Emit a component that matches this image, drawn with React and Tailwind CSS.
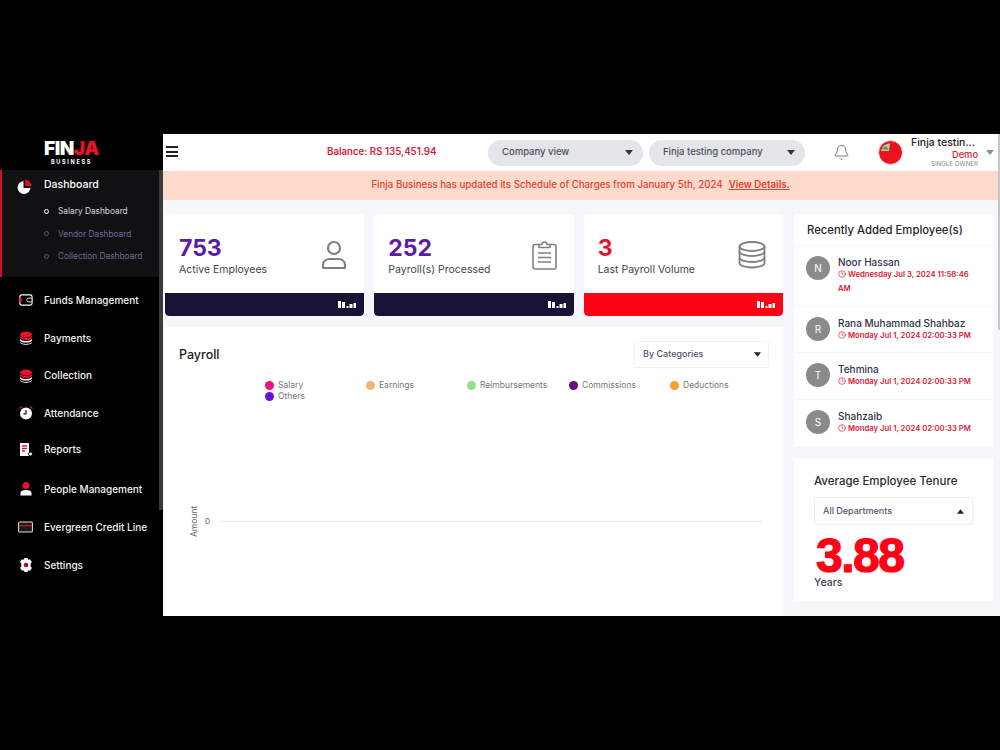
import React from "react";
import { Bell, Clock } from "lucide-react";

const font = { fontFamily: "Inter, 'Liberation Sans', sans-serif" };

const Caret = ({ up, className = "" }) => (
  <svg width="8" height="5" viewBox="0 0 8 5" className={className}>
    <path d={up ? "M0 5L4 0L8 5Z" : "M0 0L8 0L4 5Z"} fill="currentColor" />
  </svg>
);

const UserIcon = () => (
  <svg width="26" height="30" viewBox="0 0 26 30" fill="none" stroke="#808080" strokeWidth="2.200">
    <circle cx="13" cy="8" r="6" />
    <path d="M2 28v-3c0-3.500 3-6 7-6h8c4 0 7 2.500 7 6v3z" strokeLinejoin="round" />
  </svg>
);

const ClipIcon = () => (
  <svg width="25" height="30" viewBox="0 0 25 30" fill="none" stroke="#808080" strokeWidth="1.600" strokeLinejoin="round">
    <path d="M7 4.500H3a2 2 0 0 0-2 2V27a2 2 0 0 0 2 2h19a2 2 0 0 0 2-2V6.500a2 2 0 0 0-2-2h-4" />
    <path d="M7 7.500V4.500h3a2.500 2.500 0 0 1 5 0h3v3z" />
    <path d="M6 13h13M6 17.500h13M6 22h13" />
  </svg>
);

const StackIcon = () => (
  <svg width="28" height="28" viewBox="0 0 28 28" fill="none" stroke="#808080" strokeWidth="1.800">
    <ellipse cx="14" cy="5.500" rx="12.500" ry="4.500" />
    <path d="M1.500 5.500v5c0 2.500 5.600 4.500 12.500 4.500s12.500-2 12.500-4.500v-5" />
    <path d="M1.500 10.500v6c0 2.500 5.600 4.500 12.500 4.500s12.500-2 12.500-4.500v-6" />
    <path d="M1.500 16.500v5.500c0 2.500 5.600 4.500 12.500 4.500s12.500-2 12.500-4.500v-5.500" />
  </svg>
);

const icons = {
  wallet: (
    <svg width="16" height="14" viewBox="0 0 16 14">
      <rect x="2" y="1.500" width="13" height="11" rx="2" fill="none" stroke="#fff" strokeWidth="1.200" />
      <rect x="9.500" y="5" width="5.500" height="4" rx="1.500" fill="#000" stroke="#fff" strokeWidth="1" />
      <circle cx="2.500" cy="7" r="2" fill="#e8112d" />
    </svg>
  ),
  coins: (
    <svg width="14" height="14" viewBox="0 0 14 14">
      <ellipse cx="7" cy="3.500" rx="6" ry="3" fill="#e8112d" />
      <path d="M1 4v2c0 1.600 2.700 3 6 3s6-1.400 6-3V4c0 1.600-2.700 3-6 3S1 5.600 1 4z" fill="#e8112d" />
      <path d="M1 7.500v1.500c0 1.600 2.700 2.600 6 2.600s6-1 6-2.600V7.500c0 1.600-2.700 2.500-6 2.500s-6-.9-6-2.500z" fill="#fff" />
      <path d="M1 10.500v.7c0 1.500 2.700 2.500 6 2.500s6-1 6-2.500v-.7c0 1.500-2.700 2.400-6 2.400s-6-.9-6-2.400z" fill="#fff" />
    </svg>
  ),
  clock: (
    <svg width="14" height="14" viewBox="0 0 14 14">
      <path d="M0.500 2.500L3 .5M13.500 2.500L11 .5" stroke="#e8112d" strokeWidth="1.200" />
      <circle cx="7" cy="7.500" r="6" fill="#fff" />
      <path d="M7 4v3.800h-2.500" stroke="#111" strokeWidth="1.200" fill="none" />
    </svg>
  ),
  report: (
    <svg width="14" height="15" viewBox="0 0 14 15">
      <path d="M1 1h9v13H1z" fill="#fff" />
      <path d="M3 4h5M3 6.500h5" stroke="#e8112d" strokeWidth="1.300" />
      <path d="M3 9h3" stroke="#333" strokeWidth="1.300" />
      <circle cx="11.500" cy="12" r="2" fill="#fff" stroke="#000" />
    </svg>
  ),
  person: (
    <svg width="12" height="14" viewBox="0 0 12 14">
      <circle cx="6" cy="3.500" r="3.500" fill="#e8112d" />
      <path d="M0.500 13.500v-2.500c0-2 2-3 5.500-3s5.500 1 5.500 3v2.500z" fill="#fff" />
    </svg>
  ),
  card: (
    <svg width="16" height="12" viewBox="0 0 16 12">
      <rect x=".6" y=".6" width="14.800" height="10.800" rx="1.500" fill="#1b1b1b" stroke="#ddd" strokeWidth="1.100" />
      <path d="M1 4.500h14" stroke="#e8112d" strokeWidth="1.200" />
    </svg>
  ),
  gear: (
    <svg width="14" height="14" viewBox="0 0 14 14">
      <path d="M5.500 0h3l.6 1.800 1.800-.6 2 2.800-1.200 1.500v3l1.200 1.500-2 2.800-1.800-.6-.6 1.800h-3l-.6-1.800-1.800.6-2-2.800 1.200-1.500v-3L.9 4l2-2.800 1.800.6z" fill="#fff" />
      <circle cx="7" cy="7" r="2.300" fill="#a50f2a" />
    </svg>
  ),
};

const menu = [
  { label: "Funds Management", icon: icons.wallet, cls: "h-[38px]" },
  { label: "Payments", icon: icons.coins, cls: "h-[38px]" },
  { label: "Collection", icon: icons.coins, cls: "h-[37px]" },
  { label: "Attendance", icon: icons.clock, cls: "h-[38px]" },
  { label: "Reports", icon: icons.report, cls: "h-[38px] pb-[4px]" },
  { label: "People Management", icon: icons.person, cls: "h-[38px]" },
  { label: "Evergreen Credit Line", icon: icons.card, cls: "h-[38px]" },
  { label: "Settings", icon: icons.gear, cls: "h-[38px]" },
];

const sub = [
  { t: "Salary Dashboard", active: true },
  { t: "Vendor Dashboard" },
  { t: "Collection Dashboard" },
];

function Sidebar() {
  return (
    <aside className="w-[163px] shrink-0 bg-black flex h-full overflow-hidden">
      <div className="flex-1 min-w-0 flex flex-col">
        <div className="h-[36px] shrink-0 flex flex-col items-center justify-center pr-[16px]">
          <div className="flex items-center leading-none h-[20px]">
            <span className="text-white font-black text-[19px] tracking-[-0.5px]">FIN</span>
            <span className="text-[#e8112d] font-black text-[19px] tracking-[-0.5px]">JA</span>
          </div>
          <span className="text-white text-[5.500px] font-bold tracking-[1.700px] leading-none mt-[1px]">BUSINESS</span>
        </div>
        <div className="h-[107px] shrink-0 bg-[#111113] border-l-[2px] border-[#d0102a] pl-[15px]">
          <div className="flex items-center h-[30px] gap-[12px]">
            <svg width="15" height="15" viewBox="0 0 15 15" className="mt-[2px]">
              <path d="M6.500 2v7h7a6.500 6.500 0 1 1-7-7z" fill="#fff" />
              <path d="M8 .5a6.500 6.500 0 0 1 6.500 6.500H8z" fill="#d0102a" />
            </svg>
            <span className="text-white text-[10.500px] font-medium">Dashboard</span>
          </div>
          <div className="flex flex-col">
            {sub.map((s) => (
              <div key={s.t} className="flex items-center h-[22.500px] pl-[27px] gap-[9px]">
                <span className={`w-[5px] h-[5px] rounded-full border ${s.active ? "border-white border-[1.500px]" : "border-[#5a5a85]"}`} />
                <span className={`text-[8.300px] whitespace-nowrap ${s.active ? "text-[#d8d8d8]" : "text-[#6c6c9c]"}`}>{s.t}</span>
              </div>
            ))}
          </div>
        </div>
        <nav className="flex flex-col pt-[4px] pl-[18px]">
          {menu.map((m) => (
            <div key={m.label} className={`flex items-center gap-[11px] ${m.cls}`}>
              <span className="w-[15px] flex justify-center shrink-0">{m.icon}</span>
              <span className="text-[#f2f2f2] text-[10px] font-medium whitespace-nowrap">{m.label}</span>
            </div>
          ))}
        </nav>
      </div>
      <div className="w-[4px] shrink-0 flex flex-col">
        <div className="h-[36px] shrink-0" />
        <div className="h-[340px] shrink-0 bg-[#3a3a3e]" />
      </div>
    </aside>
  );
}

function Pill({ label, w }) {
  return (
    <div className={`h-[26px] ${w} rounded-full bg-[#e3e5e8] flex items-center justify-between pl-[14px] pr-[10px]`}>
      <span className="text-[9.500px] font-medium text-[#4b4f63]">{label}</span>
      <Caret className="text-[#33343a]" />
    </div>
  );
}

function Header() {
  return (
    <header className="h-[37px] shrink-0 bg-white flex items-center">
      <div className="w-[18px] ml-[3px] flex flex-col gap-[2.500px] mr-[143px] -mt-[2px]">
        <span className="block h-[2px] w-[12px] bg-[#222]" />
        <span className="block h-[2px] w-[12px] bg-[#222]" />
        <span className="block h-[2px] w-[12px] bg-[#222]" />
      </div>
      <span className="text-[9.700px] font-semibold text-[#d3233a] w-[161px] whitespace-nowrap">Balance: RS 135,451.94</span>
      <Pill label="Company view" w="w-[155px]" />
      <div className="w-[6px]" />
      <Pill label="Finja testing company" w="w-[156px]" />
      <Bell size={17} strokeWidth={1} className="ml-[28px] text-[#444]" />
      <svg width="25" height="25" viewBox="0 0 25 25" className="ml-[28px] shrink-0">
        <circle cx="12.500" cy="12.500" r="12" fill="#e8151c" stroke="#f2e6e8" />
        <path d="M12 3.500A9 9 0 0 0 3 11l8 0z" fill="#b8c8b0" />
        <path d="M3.500 9L8 6l3 4z" fill="#5d9a45" />
      </svg>
      <div className="ml-[8px] w-[69px] flex flex-col items-end leading-none">
        <span className="text-[10.500px] font-medium text-[#222] self-start whitespace-nowrap">Finja testin...</span>
        <span className="text-[9.300px] font-medium text-[#d3233a] mr-[2px] mt-[1px]">Demo</span>
        <span className="text-[6.200px] text-[#8a8a8a] mr-[2px] mt-[2px] whitespace-nowrap">SINGLE OWNER</span>
      </div>
      <Caret className="text-[#8b8f96] ml-[5px] w-[10px]" />
    </header>
  );
}

function Stat({ value, label, icon, valueCls, barCls }) {
  return (
    <div className="flex-1 h-[102px] bg-white rounded-[4px] flex flex-col overflow-hidden">
      <div className="flex-1 flex items-center justify-between pl-[14px] pr-[17px] pt-[4px]">
        <div className="flex flex-col">
          <span className={`text-[23px] font-bold leading-[28px] ${valueCls}`}>{value}</span>
          <span className="text-[10.500px] text-[#3f3f46] leading-[16px]">{label}</span>
        </div>
        <span className="-mt-[2px] flex">{icon}</span>
      </div>
      <div className={`h-[23px] rounded-b-[4px] flex items-center justify-end pr-[8px] ${barCls}`}>
        <svg width="18" height="7" viewBox="0 0 18 7" fill="#fff">
          <path d="M0 0h3v7H0zM4 1h3v6H4zM8.500 5h2v2h-2zM11.500 3h3v4h-3zM15.500 2h2.500v5h-2.500z" />
        </svg>
      </div>
    </div>
  );
}

const legend = [
  ["Salary", "#f0107e", "w-[101px]"],
  ["Earnings", "#f7b27a", "w-[101px]"],
  ["Reimbursements", "#93e08c", "w-[102px]"],
  ["Commissions", "#6b0a80", "w-[101px]"],
  ["Deductions", "#fb9c2c", "w-[90px]"],
];

function Legend({ label, color, cls }) {
  return (
    <div className={`flex items-center gap-[4px] h-[11px] ${cls}`}>
      <span className="w-[9px] h-[9px] rounded-full" style={{ backgroundColor: color }} />
      <span className="text-[8.500px] text-[#777] whitespace-nowrap">{label}</span>
    </div>
  );
}

function Payroll() {
  return (
    <section className="bg-white mt-[11px] flex-1 flex flex-col pl-[14px] pr-[14px] min-h-0">
      <div className="flex items-center justify-between h-[53px] pt-[1px]">
        <span className="text-[12.500px] text-[#1a1a1a] font-medium mt-[3px]">Payroll</span>
        <div className="w-[135px] h-[27px] bg-white border border-[#f0f1f4] rounded-[2px] flex items-center justify-between pl-[8px] pr-[7px]">
          <span className="text-[9px] font-medium text-[#50546b] -mt-[1px]">By Categories</span>
          <Caret className="text-[#222] w-[7px]" />
        </div>
      </div>
      <div className="pl-[86px]">
        <div className="flex items-center">
          {legend.map(([l, c, w]) => <Legend key={l} label={l} color={c} cls={w} />)}
        </div>
        <Legend label="Others" color="#6a0fd8" cls="w-[102px]" />
      </div>
      <div className="flex items-center mt-[94px] h-[50px]">
        <span className="text-[8.500px] text-[#666] -rotate-90 w-[34px] text-center -ml-[2px] -mr-[8px] whitespace-nowrap">Amount</span>
        <span className="text-[8px] text-[#666] ml-[2px] w-[6px]">0</span>
        <div className="h-px flex-1 bg-[#e8eaee] mr-[7px] ml-[8px]" />
      </div>
    </section>
  );
}

const employees = [
  ["N", "Noor Hassan", "Wednesday Jul 3, 2024 11:58:46\nAM", "h-[61px]"],
  ["R", "Rana Muhammad Shahbaz", "Monday Jul 1, 2024 02:00:33 PM", "h-[46px]"],
  ["T", "Tehmina", "Monday Jul 1, 2024 02:00:33 PM", "h-[47px]"],
  ["S", "Shahzaib", "Monday Jul 1, 2024 02:00:33 PM", "h-[46px]"],
];

function Recent() {
  return (
    <section className="bg-white h-[232px] shrink-0">
      <div className="h-[32px] flex items-center pl-[13px] pt-[1px] border-b border-[#f2f3f6]">
        <span className="text-[11.300px] font-medium text-[#1f1f1f] whitespace-nowrap">Recently Added Employee(s)</span>
      </div>
      {employees.map(([a, n, d, h], i) => (
        <div key={n} className={`flex pl-[12px] pt-[10px] ${h} ${i < 3 ? "border-b border-[#f2f3f6]" : ""}`}>
          <div className="w-[24px] h-[24px] rounded-full bg-[#8a8a8a] text-white text-[10px] flex items-center justify-center shrink-0">{a}</div>
          <div className="ml-[8px] min-w-0 flex-1">
            <div className="text-[10px] font-medium text-[#30324a] leading-[12px] whitespace-nowrap">{n}</div>
            <div className="text-[7.700px] font-semibold text-[#d3233a] leading-[14px] whitespace-pre">
              <Clock size={8} strokeWidth={2} className="inline-block mr-[2px] align-[-1px]" />
              {d}
            </div>
          </div>
        </div>
      ))}
    </section>
  );
}

function Tenure() {
  return (
    <section className="bg-white h-[142px] mt-[13px] pl-[20px] pr-[20px] shrink-0">
      <div className="text-[11.500px] font-medium text-[#2a2a33] pt-[14px] leading-[16px]">Average Employee Tenure</div>
      <div className="h-[28px] mt-[8px] border border-[#eff0f3] rounded-[2px] flex items-center justify-between pl-[8px] pr-[8px]">
        <span className="text-[9px] font-medium text-[#50546b]">All Departments</span>
        <Caret up className="text-[#222] w-[7px]" />
      </div>
      <div className="text-[48px] font-bold text-[#ff0015] leading-[40px] mt-[11px] pl-[2px] tracking-[-1.500px] [font-family:'Liberation_Sans',sans-serif] [-webkit-text-stroke:1.200px_#ff0015]">3.88</div>
      <div className="text-[10.500px] font-medium text-[#3c3e52] leading-[12px] mt-[1px]">Years</div>
    </section>
  );
}

export default function App() {
  return (
    <div className="w-[1000px] h-[750px] bg-black flex flex-col justify-start pt-[134px] pb-[134px]" style={font}>
      <div className="h-[482px] flex overflow-hidden">
        <Sidebar />
        <main className="flex-1 min-w-0 flex flex-col bg-[#f5f7fa]">
          <Header />
          <div className="h-[29px] shrink-0 bg-[#fddacb] flex items-center justify-center text-[9.700px] font-medium text-[#e2432f] pb-[1px]">
            <span>Finja Business has updated its Schedule of Charges from January 5th, 2024</span>
            <span className="underline ml-[6px] font-semibold">View Details.</span>
          </div>
          <div className="flex-1 min-h-0 flex pl-[2px] pr-[5px] pt-[14px] gap-[11px]">
            <div className="w-[618px] flex flex-col shrink-0">
              <div className="flex gap-[10px]">
                <Stat value="753" label="Active Employees" icon={<UserIcon />} valueCls="text-[#5b1aa8]" barCls="bg-[#181236]" />
                <Stat value="252" label="Payroll(s) Processed" icon={<ClipIcon />} valueCls="text-[#5b1aa8]" barCls="bg-[#181236]" />
                <Stat value="3" label="Last Payroll Volume" icon={<StackIcon />} valueCls="text-[#e8112d]" barCls="bg-[#ff0015]" />
              </div>
              <Payroll />
            </div>
            <div className="flex-1 min-w-0 flex flex-col">
              <Recent />
              <Tenure />
            </div>
          </div>
        </main>
        <div className="w-[2px] shrink-0 bg-[#f5f7fa] flex flex-col">
          <div className="h-[196px] bg-[#c4c6ca]" />
        </div>
      </div>
    </div>
  );
}
